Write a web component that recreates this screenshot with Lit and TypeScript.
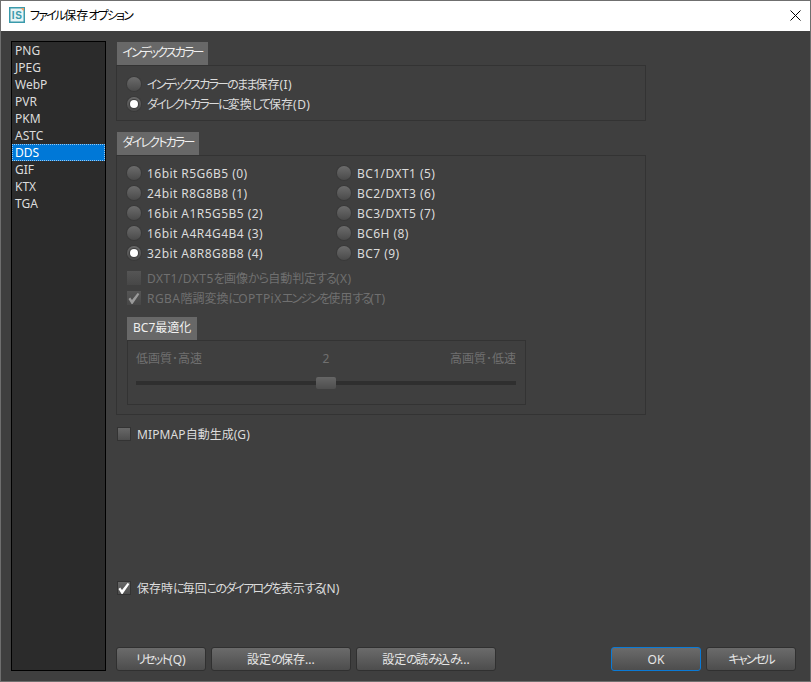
import { LitElement, html, css } from "lit";
import { customElement } from "lit/decorators.js";

// The reference's UI font sets kana tight and Latin/digits slightly loose.
const kana = (text: string) =>
  text.split(/([\u3040-\u30FF]+|[A-Za-z0-9\/ ().]+)/).map((part, i) =>
    i % 2 ? html`<span class=${/[\u3040-\u30FF]/.test(part) ? "k" : "l"}>${part}</span>` : part
  );

const radio = (label: string, on = false) => html`<div class="row"><span class="radio ${on ? "on" : ""}"></span><span>${kana(label)}</span></div>`;
const check = (label: string, on = false, dis = false) => html`<div class="row ${dis ? "dis" : ""}"><span class="check">${on ? html`<svg width="14" height="14" viewBox="0 0 14 14"><path d="M1.5 8 L3.2 6.6 L5 9 L10.6 2 L12.4 3 L5.6 13 L4.6 13 Z" fill="currentColor"/></svg>` : ""}</span><span>${kana(label)}</span></div>`;

@customElement("app-root")
export class AppRoot extends LitElement {
  static styles = css`
    :host { display: block; width: 811px; height: 682px; box-sizing: border-box; border: 1px solid #6f6f6f; background: #3f3f3f; color: #dcdcdc; font: 12px "Noto Sans", "Noto Sans CJK JP", sans-serif; font-feature-settings: "palt"; overflow: hidden; }
    .k { letter-spacing: -1.8px; }
    .l { letter-spacing: .45px; }
    .mip .l, .keep .l, .btn .l { letter-spacing: .1px; }
    .checks .row:first-child .k { letter-spacing: -.9px; }
    .title { height: 30px; box-sizing: border-box; background: #fff; color: #000; display: flex; align-items: center; padding: 0 1px 2px 8px; gap: 5px; }
    .title .name { flex: 1; }
    .logo { display: block; flex: none; }
    .logo text { font: bold 10px "Liberation Sans", sans-serif; letter-spacing: .6px; fill: #3a9aab; }
    .x { margin-right: 8px; display: block; }
    .body { display: flex; padding: 10px 0 0 10px; height: 650px; box-sizing: border-box; }
    .list { width: 95px; height: 630px; box-sizing: border-box; border: 1px solid #000; background: #2b2b2b; flex: none; display: flex; flex-direction: column; }
    .list div { height: 17px; line-height: 18px; padding-left: 3px; }
    .list .sel { background: #0078d7; color: #fff; outline: 1px dotted #9cc7ec; outline-offset: -1px; }
    .main { width: 685px; margin: 1px 0 0 10px; display: flex; flex-direction: column; }
    .tab { align-self: flex-start; height: 23px; line-height: 22px; padding: 0 5.5px; background: #686868; color: #f0f0f0; margin-left: 1px; }
    .box { border: 1px solid #333; box-sizing: border-box; width: 530px; display: flex; flex-direction: column; }
    .idx { height: 56px; padding: 8px 0 0 10px; margin-bottom: 11px; }
    .dir { height: 260px; padding: 7px 0 0 10px; }
    .cols { display: flex; }
    .cols > div { width: 210px; }
    .row { height: 20px; display: flex; align-items: center; gap: 6px; white-space: nowrap; }
    .radio { width: 14px; height: 14px; border-radius: 50%; background: linear-gradient(#6c6c6c, #4a4a4a); box-shadow: 0 0 0 1px #3a3a3a; display: block; flex: none; position: relative; }
    .radio.on::after { content: ""; position: absolute; left: 3px; top: 3px; width: 8px; height: 8px; border-radius: 50%; background: #fff; box-shadow: 0 0 1px 1px #3a3a3a; }
    .check { width: 14px; height: 14px; background: linear-gradient(#6a6a6a, #4c4c4c); box-shadow: inset 0 0 0 1px #333; display: block; flex: none; color: #fff; }
    .check svg { display: block; }
    .dis { color: #707070; }
    .dis .check { background: linear-gradient(#555, #474747); color: #9a9a9a; box-shadow: none; }
    .checks { margin-top: 5px; }
    .tab.bc7 { margin: 9px 0 0 0; padding: 0 6px; }
    .box.bc7 { width: 399px; height: 65px; padding: 8px 9px 0 8px; color: #707070; }
    .scale { display: flex; justify-content: space-between; line-height: 20px; width: 380px; }
    .track { width: 380px; height: 4px; background: #2f2f2f; margin-top: 12px; position: relative; }
    .thumb { position: absolute; left: 180px; top: -4px; width: 20px; height: 12px; border-radius: 2px; background: linear-gradient(#666, #4e4e4e); }
    .mip { margin: 9px 0 0 1px; }
    .keep { margin: 134px 0 0 1px; }
    .foot { display: flex; margin: 49px 0 0 0; width: 680px; gap: 5px; }
    .btn { height: 24px; box-sizing: border-box; border: 1px solid #303030; border-radius: 3px; background: linear-gradient(#6b6b6b, #4d4d4d); display: flex; align-items: center; justify-content: center; color: #e6e6e6; }
    .w90 { width: 90px; }
    .w140 { width: 140px; }
    .spacer { flex: 1; }
    .ok { border-color: #0a7ad6; }
  `;
  render() {
    return html`
      <div class="title">
        <svg class="logo" width="16" height="16" viewBox="0 0 16 16"><rect x=".75" y=".75" width="14.5" height="14.5" fill="#e8f4f6" stroke="#3a9aab" stroke-width="1.5"/><path d="M11.5 1 H15 V4.5 Z" fill="#e8a06a"/><text x="2.8" y="12">IS</text></svg>
        <span class="name">${kana("ファイル保存オプション")}</span>
        <svg class="x" width="11" height="11" viewBox="0 0 11 11"><path d="M.5 .5 L10.5 10.5 M10.5 .5 L.5 10.5" stroke="#000" fill="none"/></svg>
      </div>
      <div class="body">
        <div class="list">
          ${["PNG","JPEG","WebP","PVR","PKM","ASTC","DDS","GIF","KTX","TGA"].map(n => html`<div class=${n === "DDS" ? "sel" : ""}>${n}</div>`)}
        </div>
        <div class="main">
          <div class="tab">${kana("インデックスカラー")}</div>
          <div class="box idx">
            ${radio("インデックスカラーのまま保存(I)")}
            ${radio("ダイレクトカラーに変換して保存(D)", true)}
          </div>
          <div class="tab">${kana("ダイレクトカラー")}</div>
          <div class="box dir">
            <div class="cols">
              <div>
                ${radio("16bit R5G6B5 (0)")}
                ${radio("24bit R8G8B8 (1)")}
                ${radio("16bit A1R5G5B5 (2)")}
                ${radio("16bit A4R4G4B4 (3)")}
                ${radio("32bit A8R8G8B8 (4)", true)}
              </div>
              <div>
                ${radio("BC1/DXT1 (5)")}
                ${radio("BC2/DXT3 (6)")}
                ${radio("BC3/DXT5 (7)")}
                ${radio("BC6H (8)")}
                ${radio("BC7 (9)")}
              </div>
            </div>
            <div class="checks">
              ${check("DXT1/DXT5を画像から自動判定する(X)", false, true)}
              ${check("RGBA階調変換にOPTPiXエンジンを使用する(T)", true, true)}
            </div>
            <div class="tab bc7">BC7最適化</div>
            <div class="box bc7">
              <div class="scale"><span>低画質･高速</span><span>2</span><span>高画質･低速</span></div>
              <div class="track"><div class="thumb"></div></div>
            </div>
          </div>
          <div class="mip">${check("MIPMAP自動生成(G)")}</div>
          <div class="keep">${check("保存時に毎回このダイアログを表示する(N)", true)}</div>
          <div class="foot">
            <div class="btn w90">${kana("リセット(Q)")}</div>
            <div class="btn w140">${kana("設定の保存...")}</div>
            <div class="btn w140">${kana("設定の読み込み...")}</div>
            <div class="spacer"></div>
            <div class="btn ok w90">OK</div>
            <div class="btn w90">${kana("キャンセル")}</div>
          </div>
        </div>
      </div>
    `;
  }
}
